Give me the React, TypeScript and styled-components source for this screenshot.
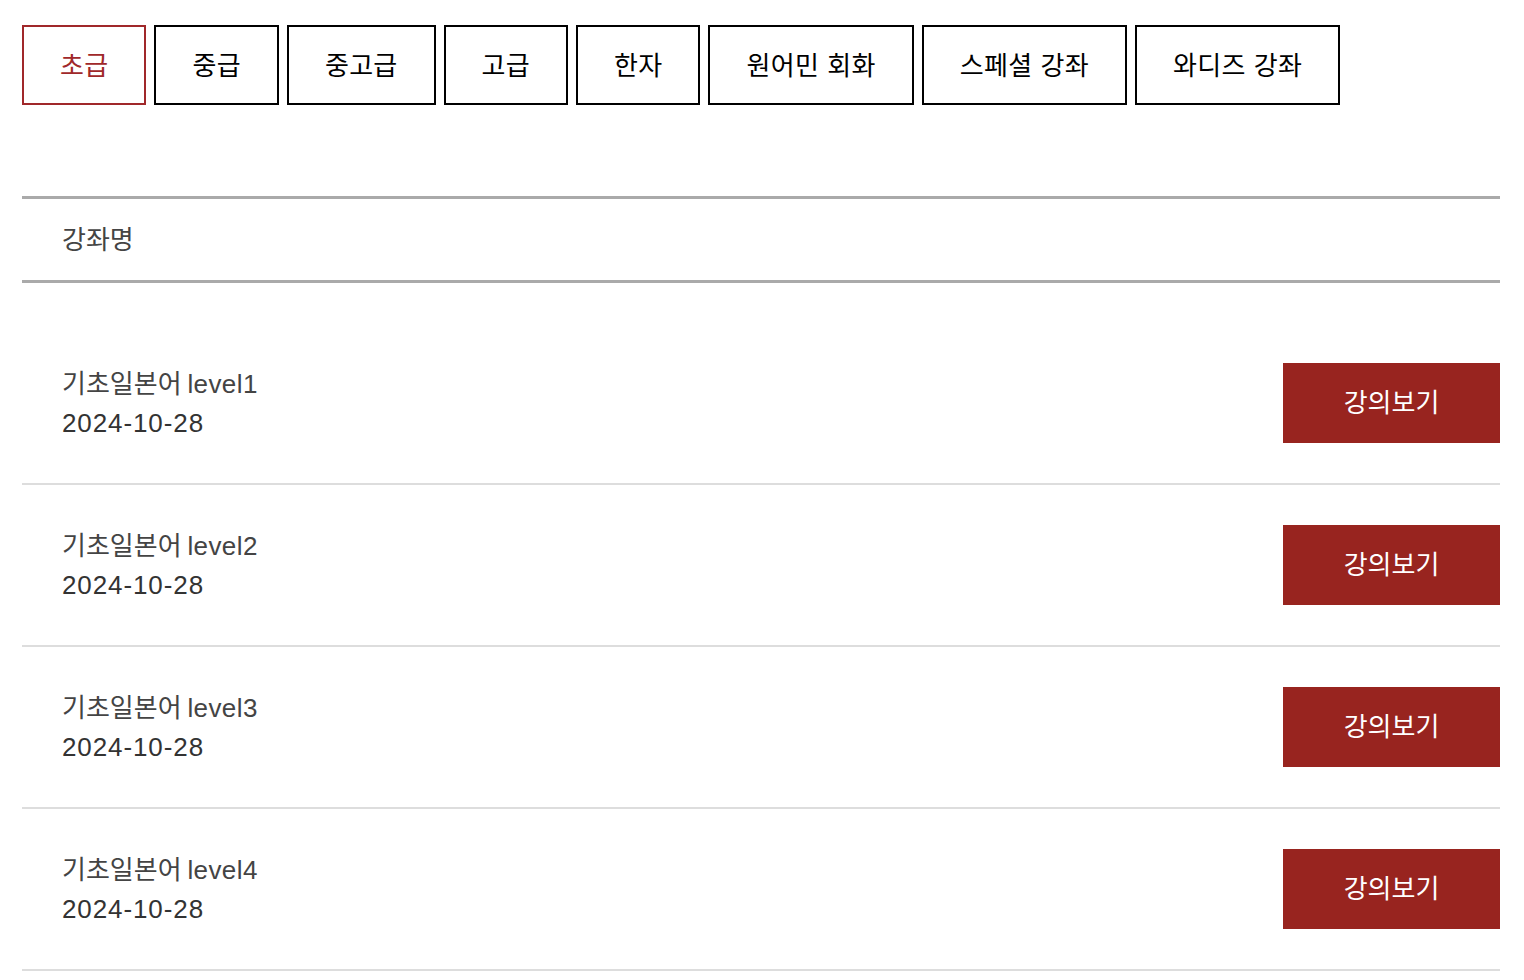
import styled, { createGlobalStyle } from 'styled-components';

const GlobalStyle = createGlobalStyle`
  html, body {
    margin: 0;
    padding: 0;
    background: #fff;
  }
  body {
    font-family: "Liberation Sans", "Noto Sans CJK KR", sans-serif;
  }
`;

const BRAND = '#98241f';

const Page = styled.div`
  padding: 25px 24px 0 22px;
`;

const TabBar = styled.div`
  display: flex;
  gap: 8px;
`;

const Tab = styled.button<{ $active?: boolean }>`
  height: 80px;
  padding: 0 36px 3px;
  background: #fff;
  border: 2px solid ${({ $active }) => ($active ? '#a0282a' : '#000')};
  color: ${({ $active }) => ($active ? '#a0282a' : '#000')};
  font-family: "Noto Sans CJK KR", sans-serif;
  font-size: 26px;
  letter-spacing: 0.3px;
  word-spacing: 2px;
  cursor: pointer;
`;

const TableHead = styled.div`
  margin-top: 91px;
  height: 87px;
  display: flex;
  align-items: center;
  padding: 0 0 4px 40px;
  box-sizing: border-box;
  border-top: 3px solid #aaa;
  border-bottom: 3px solid #aaa;
  font-family: "Noto Sans CJK KR", sans-serif;
  font-size: 26px;
  color: #444;
`;

const List = styled.ul`
  list-style: none;
  margin: 40px 0 0;
  padding: 0;
`;

const Row = styled.li`
  display: flex;
  align-items: center;
  justify-content: space-between;
  padding: 40px 0 40px 40px;
  border-bottom: 2px solid #ddd;
`;

const Info = styled.div`
  display: flex;
  flex-direction: column;
  color: #444;
`;

const Title = styled.div`
  height: 40px;
  line-height: 38px;
  font-family: "Noto Sans CJK KR", sans-serif;
  font-size: 26px;
`;

const Latin = styled.span`
  font-family: "Liberation Sans", sans-serif;
  font-size: 26px;
  letter-spacing: 0.4px;
`;

const Date = styled.div`
  height: 40px;
  line-height: 40px;
  font-size: 26px;
  letter-spacing: 0.9px;
  color: #333;
`;

const WatchButton = styled.button`
  width: 217px;
  height: 80px;
  padding: 0 0 5px;
  border: none;
  background: ${BRAND};
  color: #fff;
  font-family: "Noto Sans CJK KR", sans-serif;
  font-size: 26px;
  cursor: pointer;
`;

const tabs = ['초급', '중급', '중고급', '고급', '한자', '원어민 회화', '스페셜 강좌', '와디즈 강좌'];

const lectures = [
  { level: 'level1', date: '2024-10-28' },
  { level: 'level2', date: '2024-10-28' },
  { level: 'level3', date: '2024-10-28' },
  { level: 'level4', date: '2024-10-28' }
];

export default function App() {
  return (
    <Page>
      <GlobalStyle />
      <TabBar>
        {tabs.map((t, i) => (
          <Tab key={t} $active={i === 0}>
            {t}
          </Tab>
        ))}
      </TabBar>
      <TableHead>강좌명</TableHead>
      <List>
        {lectures.map((l) => (
          <Row key={l.level}>
            <Info>
              <Title>
                기초일본어 <Latin>{l.level}</Latin>
              </Title>
              <Date>{l.date}</Date>
            </Info>
            <WatchButton>강의보기</WatchButton>
          </Row>
        ))}
      </List>
    </Page>
  );
}
